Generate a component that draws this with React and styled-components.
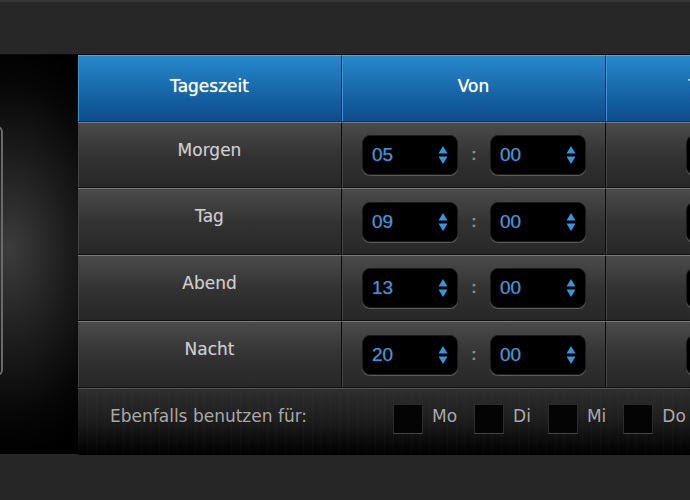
import React from "react";
import styled, { createGlobalStyle } from "styled-components";

const Global = createGlobalStyle`
  html, body {
    margin: 0;
    padding: 0;
    background: #262626;
    overflow: hidden;
    font-family: "DejaVu Sans", Verdana, sans-serif;
  }
`;

const Page = styled.div`
  width: 690px;
  height: 500px;
  background: #262626;
  overflow: hidden;
`;

const TopBar = styled.div`
  height: 52px;
  background: #272727;
  border-top: 2px solid #363636;
  border-bottom: 1px solid #0a0a0a;
`;

const Main = styled.div`
  display: flex;
  align-items: flex-start;
`;

const SidePanel = styled.div`
  flex: 0 0 78px;
  height: 399px;
  display: flex;
  align-items: center;
  background: radial-gradient(
    ellipse 130px 210px at 10px 195px,
    #3c3c3c 0%,
    #1c1c1c 45%,
    #060606 80%,
    #000 100%
  );
`;

const CardEdge = styled.div`
  width: 4px;
  height: 246px;
  margin-left: -3px;
  margin-top: -8px;
  border: 2px solid #6a6a6a;
  border-left: none;
  border-radius: 0 6px 6px 0;
`;

const Table = styled.div`
  flex: 0 0 auto;
  width: 792px;
  display: grid;
  grid-template-columns: 264px 264px 264px;
`;

const HeadCell = styled.div`
  height: 67px;
  display: flex;
  align-items: center;
  justify-content: center;
  padding-bottom: 6px;
  box-sizing: border-box;
  background: linear-gradient(#2688cc, #1766a8 55%, #0f4c8b);
  border-top: 1px solid #4aa3e3;
  border-bottom: 1px solid #0a3866;
  border-right: 1px solid #0b2740;
  box-shadow: inset 1px 0 0 #3a95d6;
  color: #fff;
  font-size: 17px;
  text-shadow: 0 0 1px rgba(255, 255, 255, 0.8);
`;

const Cell = styled.div`
  height: ${(p) => p.$h}px;
  box-sizing: border-box;
  display: flex;
  align-items: ${(p) => (p.$label ? "flex-start" : "center")};
  justify-content: ${(p) => (p.$label ? "center" : "flex-start")};
  padding: ${(p) => (p.$label ? "17px 0 0" : `0 0 0 ${p.$pad || 20}px`)};
  background: linear-gradient(#4b4b4b, #333 50%, #272727);
  border-top: 1px solid #7a7a7a;
  border-bottom: 1px solid #111;
  border-right: 1px solid #0c0c0c;
  box-shadow: inset 1px 0 0 #444;
  color: #cdcdcd;
  font-size: 17px;
  text-shadow: 0 0 1px rgba(200, 200, 200, 0.4);
`;

const Footer = styled.div`
  grid-column: 1 / -1;
  height: 67px;
  box-sizing: border-box;
  display: flex;
  align-items: flex-start;
  padding: 15px 0 0 32px;
  border-top: 1px solid #555;
  background:
    repeating-linear-gradient(90deg, rgba(255, 255, 255, 0.015) 0 1px, transparent 1px 9px),
    linear-gradient(#2e2e2e, #1e1e1e 45%, #000);
  color: #a8a8a8;
  font-size: 17px;
  line-height: 24px;
`;

const FooterLabel = styled.span`
  width: 283px;
`;

const Days = styled.div`
  display: flex;
  align-items: flex-start;
  gap: 17px;
`;

const Day = styled.label`
  display: flex;
  align-items: flex-start;
  gap: 9px;
  color: #aaa;
`;

const Box = styled.span`
  width: 28px;
  height: 28px;
  background: #040404;
  border: 1px solid #2c2c2c;
  border-bottom-color: #444;
`;

const Spinner = styled.div`
  width: 96px;
  height: 40px;
  box-sizing: border-box;
  display: flex;
  align-items: center;
  justify-content: space-between;
  padding: 0 9px 0 9px;
  background: #000;
  border-radius: 8px;
  border: 1px solid #1c1c1c;
  box-shadow: 0 1px 0 #5a5a5a;
  color: #3596e2;
  font-family: "Liberation Sans", Arial, sans-serif;
  font-size: 19px;
`;

const Colon = styled.span`
  width: 32px;
  text-align: center;
  color: #8a8a8a;
  font-family: "Liberation Sans", Arial, sans-serif;
  font-size: 16px;
  font-weight: bold;
`;

const Arrows = () => (
  <svg width="10" height="20" viewBox="0 0 10 20">
    <path d="M5 1 L9.5 8.5 H0.5 Z" fill="#3596e2" />
    <path d="M5 19 L9.5 11.5 H0.5 Z" fill="#3596e2" />
  </svg>
);

const Time = ({ value }) => (
  <Spinner>
    <span>{value}</span>
    <Arrows />
  </Spinner>
);

const rows = [
  ["Morgen", "05", 66],
  ["Tag", "09", 67],
  ["Abend", "13", 66],
  ["Nacht", "20", 67],
];

export default function App() {
  return (
    <Page>
      <Global />
      <TopBar />
      <Main>
        <SidePanel>
          <CardEdge />
        </SidePanel>
        <Table>
          <HeadCell>Tageszeit</HeadCell>
          <HeadCell>Von</HeadCell>
          <HeadCell>Temperatur</HeadCell>
          {rows.map(([name, hour, h]) => (
            <React.Fragment key={name}>
              <Cell $label $h={h}>{name}</Cell>
              <Cell $h={h}>
                <Time value={hour} />
                <Colon>:</Colon>
                <Time value="00" />
              </Cell>
              <Cell $h={h} $pad={80}>
                <Time value="20" />
              </Cell>
            </React.Fragment>
          ))}
          <Footer>
            <FooterLabel>Ebenfalls benutzen für:</FooterLabel>
            <Days>
              {["Mo", "Di", "Mi", "Do", "Fr"].map((d) => (
                <Day key={d}>
                  <Box />
                  {d}
                </Day>
              ))}
            </Days>
          </Footer>
        </Table>
      </Main>
    </Page>
  );
}
